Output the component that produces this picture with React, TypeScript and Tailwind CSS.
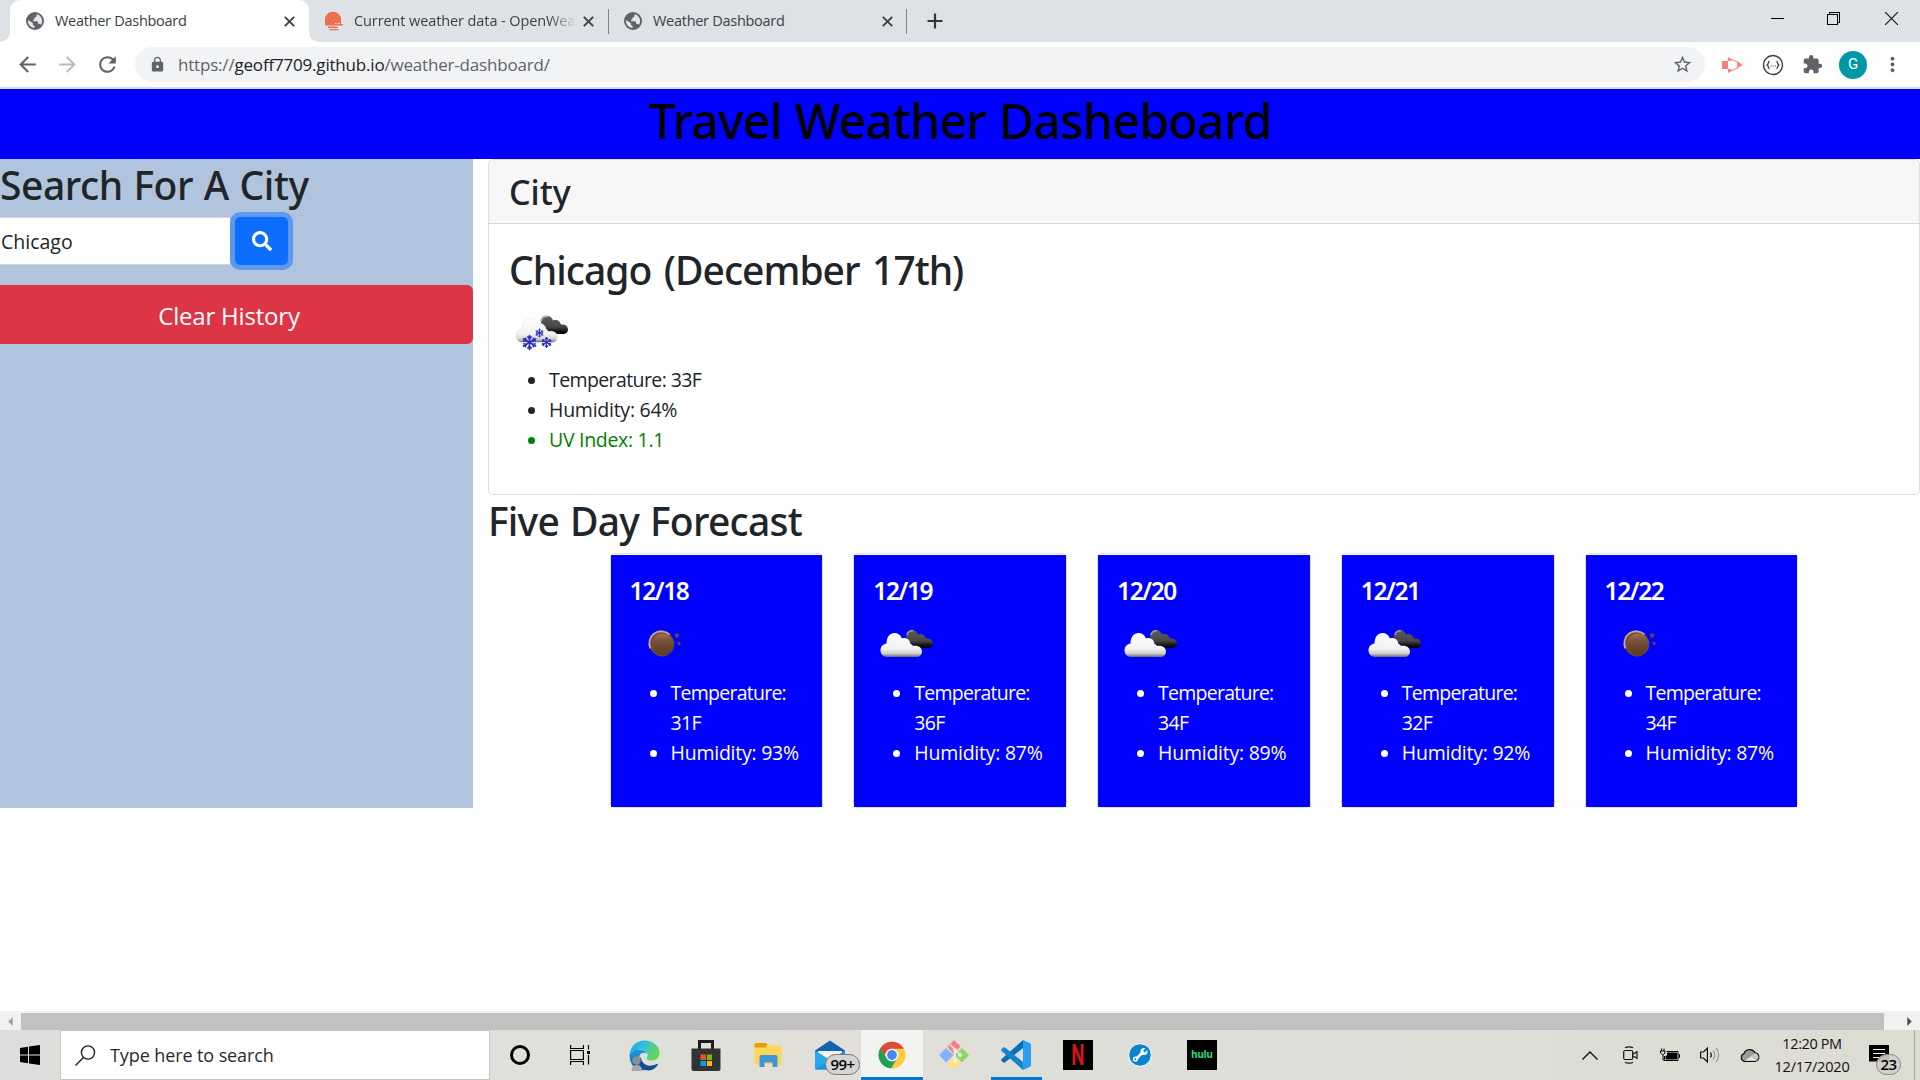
import React from "react";
import {
  MdArrowBack, MdArrowForward, MdRefresh, MdLock, MdStarBorder, MdExtension, MdMoreVert,
} from "react-icons/md";
import { FaSearch } from "react-icons/fa";

type Sky = "moon" | "clouds" | "snow";

const WHITE_CLOUD = "M13 42c-4 0-6.500-3-6.500-6.500 0-4 2.500-6.500 6-7C12.500 22 16 18 20.500 18c4 0 6.500 2.500 7.500 5.500 4-1.500 8 1 8.500 5.500 1 .5 2 .8 2.500 2 5-1 9 1.500 9 5.500 0 3.500-2.500 5.500-5.500 5.500z";
const DARK_CLOUD = "M32 21c0-4 3-6 6-6s5.500 2 6 4.500c4-1.500 7 .5 8 4 4-.5 7 1.500 7 5 0 3-2.500 4.500-5 4.500H43c-3 0-4-3-6-5-2-1-5-4-5-7z";

function Flake({ x, y, r }: { x: number; y: number; r: number }) {
  return (
    <g stroke="#2a31b8" strokeWidth={r * 0.24} strokeLinecap="round" fill="none">
      {[0, 60, 120, 180, 240, 300].map((a) => (
        <path
          key={a}
          d={`M${x} ${y}v${-r}M${x - r * 0.22} ${y - r * 0.8}l${r * 0.22} ${r * 0.3}l${r * 0.22} ${-r * 0.3}`}
          transform={`rotate(${a} ${x} ${y})`}
        />
      ))}
    </g>
  );
}

function SkyIcon({ kind, id }: { kind: Sky; id: string }) {
  return (
    <svg viewBox="0 0 62.5 62.5" className="block size-[62.5px]">
      <defs>
        <linearGradient id={`${id}w`} x1="0" y1="0" x2="0" y2="1">
          <stop offset="0" stopColor="#fff" /><stop offset=".65" stopColor="#f1f1f1" />
          <stop offset=".85" stopColor="#d2d2d2" /><stop offset="1" stopColor="#6a6a6a" />
        </linearGradient>
        <linearGradient id={`${id}d`} x1="0" y1="0" x2="0" y2="1">
          <stop offset="0" stopColor="#5a5a5a" /><stop offset=".6" stopColor="#484848" />
          <stop offset=".85" stopColor="#111" /><stop offset="1" stopColor="#000" />
        </linearGradient>
        <linearGradient id={`${id}m`} x1="0" y1="0" x2="0" y2="1">
          <stop offset="0" stopColor="#a3714f" /><stop offset=".3" stopColor="#7c543a" />
          <stop offset=".6" stopColor="#684630" /><stop offset="1" stopColor="#5a3c2a" />
        </linearGradient>
      </defs>
      {kind === "moon" && (
        <g transform="translate(1.500 .500)">
          <circle cx="30.500" cy="28.500" r="12.400" fill="#6a4934" />
          <path d="M19 33a12 12 0 0 1 19-14" stroke="#c9a68c" strokeWidth="1.800" fill="none" />
          <circle cx="31" cy="29" r="10.900" fill={`url(#${id}m)`} />
          <path d="m45.500 16.500.9 2.200 2.300.2-1.700 1.500.5 2.300-2-1.200-2 1.200.5-2.300-1.700-1.500 2.300-.2zM47.500 25.300l.7 1.600 1.700.2-1.300 1.100.4 1.700-1.500-.9-1.500.9.4-1.700-1.300-1.100 1.700-.2z" fill="#664b44" />
        </g>
      )}
      {kind === "clouds" && (
        <g transform="translate(1 0)">
          <path d={DARK_CLOUD} fill={`url(#${id}d)`} />
          <path d="M33 20c.8-3.200 3-4.500 6-4.300" stroke="#999" strokeWidth="1.500" fill="none" />
          <path d={WHITE_CLOUD} fill={`url(#${id}w)`} />
        </g>
      )}
      {kind === "snow" && (
        <g>
          <path d={DARK_CLOUD} fill={`url(#${id}d)`} transform="translate(0 -1)" />
          <path d="M32 19c1-3.500 3.500-5 7-4.500" stroke="#aaa" strokeWidth="1.800" fill="none" />
          <path d={WHITE_CLOUD} fill={`url(#${id}w)`} stroke="#e4e4e4" strokeWidth=".6" transform="translate(.5 -1.500)" />
          <Flake x={20.500} y={40.500} r={7} />
          <Flake x={30.500} y={31} r={4} />
          <Flake x={37.500} y={40.500} r={5} />
        </g>
      )}
    </svg>
  );
}

function Globe() {
  return (
    <svg viewBox="0 0 18 18" className="size-[18px]">
      <circle cx="9" cy="9" r="9" fill="#5f6368" />
      <path d="M10.800 2.300 10.500 4c-.2 1-.9 1.300-1.900 1.400l-.2 1.400c-.1.600-.6.9-1.300.9v1.500h3.400c1 0 1.500.6 1.500 1.500v1h1c1 0 1.700.5 2 1.200A7 7 0 0 0 10.800 2.300z" fill="#e4e6e9" />
      <path d="M2 8a7 7 0 0 0 6.500 8v-2.200c-1 0-1.700-.7-1.700-1.700v-1z" fill="#e4e6e9" />
    </svg>
  );
}

function Close() {
  return (
    <svg viewBox="0 0 17 17" className="size-[17px] shrink-0" stroke="#3c4043" strokeWidth="1.900">
      <path d="m3.800 3.800 9.400 9.400M13.200 3.800l-9.400 9.400" />
    </svg>
  );
}

function Flare({ flip }: { flip?: boolean }) {
  return (
    <svg viewBox="0 0 10 10" className={flip ? "size-[10px] -scale-x-100" : "size-[10px]"}>
      <path d="M10 0v10H0A10 10 0 0 0 10 0z" fill="#fff" />
    </svg>
  );
}

function BrowserTabs() {
  return (
    <div className="flex h-[42px] items-center bg-[#dee1e6] text-[14.5px] tracking-[-0.28px] text-[#3c4043]">
      <div className="flex h-full w-[10px] items-end"><Flare /></div>
      <div className="flex h-full w-[299px] items-center rounded-t-[10px] bg-white pr-[11px] pl-[16px]">
        <Globe />
        <span className="ml-[11px] flex-1">Weather Dashboard</span>
        <Close />
      </div>
      <div className="flex h-full w-[10px] items-end"><Flare flip /></div>
      <div className="flex w-[289px] items-center pl-[5px]">
        <svg viewBox="0 0 20 20" className="size-[20px]">
          <path d="M1 13V8.500a8 7.800 0 0 1 16 0V13h2v1.500H1zM4 15.500h9.500V17H4zM5.500 18h9v1.200h-9z" fill="#ee6f4d" />
          <path d="M11 12.500h1.500M14 12.500h1.500M14.500 16h2" stroke="#fff" strokeWidth="1.200" />
        </svg>
        <span className="ml-[10px] w-[220px] whitespace-nowrap tracking-[-0.1px] [mask-image:linear-gradient(to_right,#000_195px,transparent_222px)]">
          Current weather data - OpenWea
        </span>
        <div className="ml-[6px]"><Close /></div>
      </div>
      <div className="h-[25px] w-px bg-[#808387]" />
      <div className="flex w-[297px] items-center pr-[10px] pl-[15px]">
        <Globe />
        <span className="ml-[11px] flex-1">Weather Dashboard</span>
        <Close />
      </div>
      <div className="h-[25px] w-px bg-[#808387]" />
      <svg viewBox="0 0 16 16" className="ml-[20px] size-[16px]" stroke="#33373a" strokeWidth="2.200"><path d="M8 .5v15M.5 8h15" /></svg>
      <div className="ml-auto flex items-center pr-[22px] pb-[5px]">
        <div className="h-px w-[13px] bg-black" />
        <svg viewBox="0 0 13 13" className="ml-[43px] size-[13px]" fill="none" stroke="#000" shapeRendering="crispEdges">
          <path d="M.5 2.500h10v10H.5zM2.500 2.500v-2h10v10h-2" />
        </svg>
        <svg viewBox="0 0 13 13" className="ml-[45px] size-[13px]" stroke="#111" strokeWidth="1.100">
          <path d="m0 0 13 13M13 0 0 13" />
        </svg>
      </div>
    </div>
  );
}

function Toolbar() {
  return (
    <div className="flex h-[47px] items-center border-b-2 border-[#d7dadd] bg-white text-[#5f6368]">
      <MdArrowBack className="ml-[15px] size-[25px]" />
      <MdArrowForward className="ml-[15px] size-[25px] text-[#babcbe]" />
      <MdRefresh className="ml-[15px] size-[25px]" />
      <div className="ml-[15px] flex h-[35px] w-[1570px] items-center rounded-full bg-[#f1f3f4] pr-[12px] pl-[14px]">
        <MdLock className="size-[17px]" />
        <span className="ml-[12px] flex-1 text-[17px] tracking-[-0.19px]">
          https://<span className="text-[#202124]">geoff7709.github.io</span>/weather-dashboard/
        </span>
        <MdStarBorder className="size-[21px]" />
      </div>
      <svg viewBox="0 0 22 20" className="ml-[16px] h-[20px] w-[22px]" fill="#ff7f80">
        <path d="M1 6h6v8H1zM7 2l5 3-3 1H7zM7 14h2l3 1.500L7 18zM17 6.500l4.500 3.500-4.500 3z" />
        <path d="M8 3.500 16.500 7v6L8 16.500" fill="none" stroke="#ff9494" strokeWidth="1.300" />
      </svg>
      <svg viewBox="0 0 22 22" className="ml-[19px] size-[22px]" fill="none" stroke="#3d3d3d">
        <circle cx="11" cy="11" r="9.500" strokeWidth="1.400" />
        <path d="M7.500 7.500c-2 0-.5 2.800-2.300 3.500 1.800.7.300 3.500 2.300 3.500M14.500 7.500c2 0 .5 2.800 2.300 3.500-1.800.7-.3 3.500-2.300 3.500" strokeWidth="1.300" />
        <path d="M8.500 12h5.500" strokeWidth="1" strokeDasharray="1 1.200" />
      </svg>
      <MdExtension className="ml-[18px] size-[21px]" />
      <div className="ml-[16px] flex size-[28px] items-center justify-center rounded-full bg-[#0097a7] font-['Roboto'] text-[15px] text-white">G</div>
      <MdMoreVert className="ml-[14px] size-[23px]" />
    </div>
  );
}

const days: { date: string; sky: Sky; temp: string; hum: string }[] = [
  { date: "12/18", sky: "moon", temp: "31F", hum: "93%" },
  { date: "12/19", sky: "clouds", temp: "36F", hum: "87%" },
  { date: "12/20", sky: "clouds", temp: "34F", hum: "89%" },
  { date: "12/21", sky: "clouds", temp: "32F", hum: "92%" },
  { date: "12/22", sky: "moon", temp: "34F", hum: "87%" },
];

function Bullet() {
  return <span className="mt-[12px] mr-[14px] size-[7px] shrink-0 rounded-full bg-current" />;
}

function DayCard({ date, sky, temp, hum }: (typeof days)[number]) {
  return (
    <div className="h-[255px] w-[213.75px] rounded-[5px] border border-[#dfdfdf] pt-px">
      <div className="h-full bg-[#0000ff] pt-[20px] pl-[19px] text-white">
        <h5 className="mb-[10px] h-[30px] pt-px font-['Noto_Sans'] text-[24.500px] leading-[30px] font-semibold tracking-[-1.400px]">{date}</h5>
        <SkyIcon kind={sky} id={`d${date.slice(3)}`} />
        <ul className="pl-[20px] text-[19.500px] leading-[30px]">
          <li className="flex"><Bullet /><span className="tracking-[-0.75px]">Temperature:<br />{temp}</span></li>
          <li className="flex whitespace-nowrap"><Bullet /><span className="tracking-[-0.25px]">Humidity: {hum}</span></li>
        </ul>
      </div>
    </div>
  );
}

function Dashboard() {
  return (
    <main className="h-[922px] bg-white text-[#212529]">
      <header className="flex h-[70px] justify-center bg-[#0000ff]">
        <h1 className="pt-px font-['Noto_Sans'] text-[48.500px] leading-[60px] font-medium tracking-[-0.9px] text-black [word-spacing:1px]">Travel Weather Dasheboard</h1>
      </header>
      <div className="flex h-[649px]">
        <aside className="w-[473px] bg-[#b0c4de]">
          <h2 className="h-[58px] pt-[2px] font-['Noto_Sans'] text-[39px] leading-[48px] font-medium tracking-[-0.45px] [word-spacing:1px]">Search For A City</h2>
          <div className="flex">
            <div className="h-[48px] w-[230px] border-y border-[#ced4da] bg-white pl-px text-[19.500px] leading-[48px]">Chicago</div>
            <button className="ml-[5px] flex h-[48px] w-[53px] items-center justify-center rounded-[5px] bg-[#0d6efd] text-white ring-5 ring-[#0d6efd]/50">
              <FaSearch className="size-[20px]" />
            </button>
          </div>
          <button className="mt-[20px] h-[59px] w-full rounded-r-[6px] bg-[#dc3545] pt-[3px] pr-[15px] text-center text-[24px] tracking-[-0.2px] text-white">Clear History</button>
        </aside>
        <section className="ml-[15px] flex-1">
          <div className="h-[336px] overflow-hidden rounded-[5px] border border-[#dfdfdf]">
            <div className="h-[64px] border-b border-[#d9d9d9] bg-[#f7f7f7] pt-[11px] pl-[20px]">
              <h3 className="font-['Noto_Sans'] text-[34px] leading-[42px] font-medium">City</h3>
            </div>
            <div className="pt-[22px] pl-[20px]">
              <h2 className="h-[56px] font-['Noto_Sans'] text-[39px] leading-[48px] font-medium tracking-[-1px] [word-spacing:3.500px]">Chicago (December 17th)</h2>
              <SkyIcon kind="snow" id="now" />
              <ul className="pl-[19px] text-[19.500px] leading-[30px]">
                <li className="flex"><Bullet /><span className="tracking-[-0.6px]">Temperature: 33F</span></li>
                <li className="flex"><Bullet /><span className="tracking-[-0.25px]">Humidity: 64%</span></li>
                <li className="flex text-[#008000]"><Bullet /><span className="tracking-[-0.3px]">UV Index: 1.1</span></li>
              </ul>
            </div>
          </div>
          <h2 className="h-[58px] pt-[2px] font-['Noto_Sans'] text-[39px] leading-[48px] font-medium tracking-[-0.75px] [word-spacing:1.500px]">Five Day Forecast</h2>
          <div className="ml-[121.600px] flex gap-[30px]">
            {days.map((d) => <DayCard key={d.date} {...d} />)}
          </div>
        </section>
      </div>
    </main>
  );
}

function Scrollbar() {
  return (
    <div className="flex h-[19px] items-center bg-[#f1f1f1] pt-[2px]">
      <svg viewBox="0 0 5 10" className="ml-[8px] h-[9px] w-[5px]"><path d="M5 0v10L0 5z" fill="#a3a3a3" /></svg>
      <div className="ml-[8px] h-[17px] w-[1863px] bg-[#c1c1c1]" />
      <svg viewBox="0 0 5 10" className="ml-[23px] h-[9px] w-[5px]"><path d="M0 0v10l5-5z" fill="#505050" /></svg>
    </div>
  );
}

function Cell({ children, className = "" }: { children: React.ReactNode; className?: string }) {
  return <div className={`relative flex h-full w-[62px] items-center justify-center ${className}`}>{children}</div>;
}

function Edge() {
  return (
    <svg viewBox="0 0 31 31" className="size-[31px]">
      <defs>
        <linearGradient id="eg" x1="0" y1="0" x2="1" y2=".4"><stop offset="0" stopColor="#1f9fe0" /><stop offset=".5" stopColor="#35c1d8" /><stop offset="1" stopColor="#63d957" /></linearGradient>
        <linearGradient id="eb" x1="0" y1="0" x2="0" y2="1"><stop offset="0" stopColor="#1b9de2" /><stop offset="1" stopColor="#0f5da8" /></linearGradient>
      </defs>
      <path d="M.5 15C1 6.500 7.500.500 15.500.500 24 .5 30.500 6 30.500 13c0 5-4 7.500-8 7.500-4.500 0-5.500-1.500-4.500-3 1.500-2 1-6-4-7.500C9 8.500 3 11 .5 15z" fill="url(#eg)" />
      <path d="M.5 15C3 10 9 8.500 13.500 10c3 1 4 2.500 4 4-2-2-6-1.500-7 2-1.500 6 4 13 11 12-8 5-21 2-21-13z" fill="url(#eb)" />
      <path d="M12 17c0 6 5.500 9.500 10.500 8.500 3-.5 5-2 6-1.500.8.500.3 1-.5 2-4 5-10 5.500-14 3-4-3-4.500-8.500-2-12z" fill="#154d95" />
      <circle cx="7.500" cy="20.500" r="4.200" fill="#8b8d8f" />
      <path d="M2.500 31c0-8 10-8 11 0z" fill="#a5a7a9" />
    </svg>
  );
}

function Chrome() {
  return (
    <svg viewBox="0 0 28 28" className="size-[28px]">
      <circle cx="14" cy="14" r="13.500" fill="#fbcd3e" />
      <path d="M2.300 7.250A13.500 13.500 0 0 1 25.700 7.800H14a6.200 6.200 0 0 0-5.600 3.600L6 14z" fill="#dc4b3f" />
      <path d="M2.300 7.250A13.500 13.500 0 0 0 13 27.500l5.900-9.700A6.200 6.200 0 0 1 8.600 17z" fill="#1fa05a" />
      <circle cx="14" cy="14" r="6.300" fill="#fff" />
      <circle cx="14" cy="14" r="4.900" fill="#4587f3" />
    </svg>
  );
}

function Taskbar() {
  return (
    <div className="flex h-[50px] items-center bg-[linear-gradient(90deg,#dddedb_0%,#dfe0db_30%,#e1dfd8_42%,#dedfda_60%,#dddcd1_100%)]">
      <div className="flex w-[60px] justify-center">
        <svg viewBox="0 0 20 20" className="size-[20px]"><path d="M0 3 8 1.800v7.700H0zM9 1.600 20 0v9.500H9zM0 10.500h8v7.700L0 17zM9 10.500h11V20L9 18.400z" /></svg>
      </div>
      <div className="mr-[-1px] flex h-full w-[430px] items-center border border-[#c6c6c4] bg-white pl-[14px]">
        <svg viewBox="0 0 21 21" className="size-[21px]" fill="none" stroke="#222" strokeWidth="1.400"><circle cx="13" cy="7.500" r="6.600" /><path d="m8.500 12.500-8 8" /></svg>
        <span className="ml-[14px] text-[18px] tracking-[-0.1px] text-[#2b2b2b]">Type here to search</span>
      </div>
      <Cell><div className="size-[20px] rounded-full border-3 border-black" /></Cell>
      <Cell className="pr-[3px]">
        <svg viewBox="0 0 21 20" className="h-[20px] w-[21px]" fill="none" stroke="#000" strokeWidth="1.200">
          <path d="M.6 0v3.500h12.800V0M.6 5.500h12.800v9H.6zM.6 20v-3.500h12.800V20M18.500 0v4.500M18.500 10v9.500" /><path d="M17 6h3v3h-3z" fill="#000" stroke="none" />
        </svg>
      </Cell>
      <Cell><Edge /></Cell>
      <Cell>
        <svg viewBox="0 0 30 31" className="h-[31px] w-[30px]">
          <path d="M8.500 9V1.500h13V9" fill="none" stroke="#1c1c1c" strokeWidth="3" />
          <path d="M.5 8.500h29V29a2 2 0 0 1-2 2h-25a2 2 0 0 1-2-2z" fill="#333" />
          <path d="M9.500 14.500H15V20H9.500z" fill="#f25022" /><path d="M16 14.500h5V20h-5z" fill="#7fba00" />
          <path d="M9.500 21H15v5H9.500z" fill="#00a4ef" /><path d="M16 21h5v5h-5z" fill="#ffb900" />
        </svg>
      </Cell>
      <Cell>
        <svg viewBox="0 0 28 24" className="h-[24px] w-[28px]">
          <path d="M.5 1.200C.5.500 1 0 1.700 0h10.500l2 2.500h12.300c.6 0 1 .5 1 1v18H.5z" fill="#ffd65c" />
          <path d="M.5 1.200C.5.500 1 0 1.700 0h10.500l1.300 1.800L11.500 4.500H.5z" fill="#e3a008" />
          <path d="M5.500 24V14a2 2 0 0 1 2-2h14a2 2 0 0 1 2 2v10h-5v-4.500h-8V24z" fill="#3f96dc" />
        </svg>
      </Cell>
      <Cell>
        <svg viewBox="0 0 30 30" className="size-[30px]">
          <path d="M0 10.500 15 .500l15 10V28H0z" fill="#1164b4" /><path d="M3 11h24v7L15 24 3 18z" fill="#f4f4f4" />
          <path d="M0 10.500 15 20v9.500H0z" fill="#28a8ea" /><path d="M30 10.500 15 20 0 29.500h30z" fill="#1f93dd" />
        </svg>
        <div className="absolute top-[24px] left-[26px] flex h-[21px] w-[35px] items-center justify-center rounded-full border border-[#777] bg-[#d4d5d2] text-[15px] font-semibold tracking-[-0.5px] text-black">99+</div>
      </Cell>
      <Cell className="border-b-3 border-[#0078d7] bg-[#f3f3f1]"><div className="pt-[3px]"><Chrome /></div></Cell>
      <Cell>
        <svg viewBox="0 0 30 30" className="size-[30px]">
          <path d="m15 0 6.500 6.500L15 14 8.500 7z" fill="#ff7f7f" /><path d="m0 15 7-7 7.500 7-7.500 7.500z" fill="#84b1fb" />
          <path d="m30 15-7-7-7.500 7 7.500 7.500z" fill="#8fd662" /><path d="m15 30 6.500-6.500L15 16l-6.500 7z" fill="#ffe17d" />
          <path d="m11.500 5 4.500 4.500V21M16 10l5 4.500" stroke="#eee" strokeWidth="1.500" fill="none" />
          <circle cx="16" cy="10" r="2" fill="#eee" /><circle cx="16" cy="21" r="2" fill="#eee" /><circle cx="21" cy="15" r="2" fill="#eee" />
        </svg>
      </Cell>
      <Cell className="flex-col justify-end">
        <svg viewBox="0 0 30 30" className="mb-[7px] size-[30px]">
          <path d="M22 0v8L4 22.500c-.6.500-1 .4-1.500 0L.600 21c-.6-.6-.6-1.300 0-2z" fill="#0a6fb8" />
          <path d="M22 30v-8L4 7.500c-.6-.5-1-.4-1.500 0L.600 9c-.6.600-.6 1.300 0 2z" fill="#1585cb" />
          <path d="M22 0v30l7-3.300c.6-.3 1-.8 1-1.500V4.800c0-.7-.4-1.200-1-1.500z" fill="#2a9df0" />
        </svg>
        <div className="h-[3px] w-[51px] bg-[#0078d7]" />
      </Cell>
      <Cell>
        <div className="flex size-[30px] items-center justify-center bg-black">
          <span className="scale-x-65 font-['Roboto'] text-[29px] leading-none font-bold text-[#d9111b]">N</span>
        </div>
      </Cell>
      <Cell>
        <svg viewBox="0 0 24 24" className="size-[24px]">
          <circle cx="12" cy="12" r="11.300" fill="#0a84cf" stroke="#fff" strokeWidth="1" />
          <path d="m8 16 7-7" stroke="#fff" strokeWidth="2.600" />
          <circle cx="7.500" cy="16" r="2.600" fill="#fff" /><circle cx="16" cy="8.500" r="3.500" fill="#fff" />
          <path d="m16 8.500 4-4" stroke="#0a84cf" strokeWidth="2.500" /><circle cx="7.300" cy="16.200" r="1" fill="#0a84cf" />
        </svg>
      </Cell>
      <Cell>
        <div className="flex size-[30px] items-center justify-center bg-black pb-px font-['Inter'] text-[10px] font-bold text-[#1ce783]">hulu</div>
      </Cell>
      <div className="ml-auto flex h-full items-center">
        <div className="flex w-[40px] justify-center">
          <svg viewBox="0 0 16 9" className="h-[9px] w-[16px]" fill="none" stroke="#111" strokeWidth="1.400"><path d="m.5 8.500 7.500-7.500 7.500 7.500" /></svg>
        </div>
        <div className="flex w-[40px] justify-center pl-px">
          <svg viewBox="0 0 15 18" className="h-[18px] w-[15px]" fill="none" stroke="#111" strokeWidth="1.200"><rect x=".7" y="4.500" width="9" height="9" rx="1.500" /><path d="m10 8 4-2.200v6.400L10 10M2 1.800c2-1.300 6-1.300 8 0M2 16.200c2 1.300 6 1.300 8 0" /></svg>
        </div>
        <div className="flex w-[40px] justify-center">
          <svg viewBox="0 0 20 14" className="h-[14px] w-[20px]" fill="none" stroke="#000" strokeWidth="1"><path d="M4.500 8v4.500h13.500v-9H6.500M18.500 6.500h1v3h-1" /><path d="M7.500 5h9v6H6V8h1.500z" fill="#000" /><path d="M1.500.5v2.500M4 .5v2.500M.5 3h4.500v2L3.500 6.500h-1L.5 5zM3 7v5h1.500" /></svg>
        </div>
        <div className="flex w-[40px] justify-center">
          <svg viewBox="0 0 20 18" className="h-[18px] w-[20px]" fill="none" stroke="#111" strokeWidth="1.200"><path d="M.6 6h2.800l4-3.800v13.600l-4-3.800H.6z" /><path d="M10.500 6.500c1 1.500 1 3.500 0 5" /><path d="M13 4.500c2.200 2.700 2.200 6.300 0 9M16 2c3.500 4 3.500 10 0 14" stroke="#999" /></svg>
        </div>
        <div className="flex w-[40px] justify-center">
          <svg viewBox="0 0 20 14" className="h-[14px] w-[20px]"><path d="M4.500 13.300a4 4 0 0 1-.5-7.700A6 6 0 0 1 14.800 4.500a4.500 4.500 0 0 1 .7 8.800z" fill="#9b9b9b" stroke="#111" strokeWidth="1.200" /><path d="m4.500 12.700 6.500-4.500 6 4-1.500.5z" fill="#e6e6e6" /><path d="m11 8 4-2.500c3 .5 4.500 4 2.500 6z" fill="#c9c9c9" /></svg>
        </div>
        <div className="w-[85px] text-center text-[14.500px] leading-[23px] text-[#111]">
          <div className="pr-[1px] tracking-[-0.4px]">12:20 PM</div>
          <div className="pr-px tracking-[-0.2px]">12/17/2020</div>
        </div>
        <div className="relative h-full w-[59px]">
          <svg viewBox="0 0 20 20" className="mt-[15px] ml-[14px] size-[20px]"><path d="M0 0h20v16.500H0z" /><path d="M4 4.500h12M4 8.500h12M4 12.500h7" stroke="#fff" strokeWidth="1.200" /></svg>
          <div className="absolute top-[24px] left-[21px] flex h-[21px] w-[25px] items-center justify-center rounded-full border border-[#888] bg-[#cfcfc8]/90 text-[15px] font-semibold tracking-[-0.5px] text-black">23</div>
        </div>
        <div className="h-full w-[6px] border-l border-[#a5a59c]" />
      </div>
    </div>
  );
}

export default function App() {
  return (
    <div className="flex h-[1080px] w-[1920px] flex-col overflow-hidden font-['Open_Sans',sans-serif]">
      <BrowserTabs />
      <Toolbar />
      <Dashboard />
      <Scrollbar />
      <Taskbar />
    </div>
  );
}
